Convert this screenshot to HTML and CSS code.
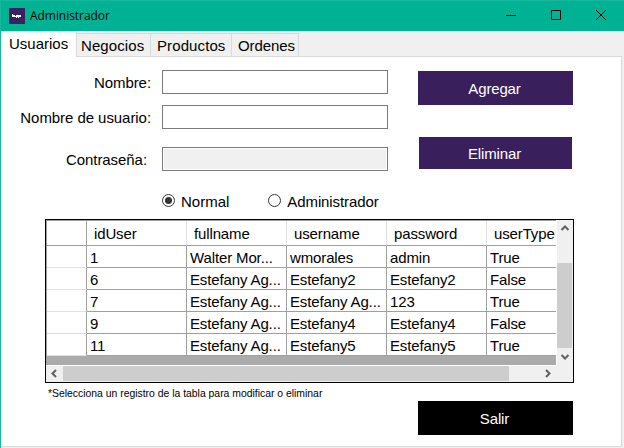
FILE: index.html
```html
<!DOCTYPE html>
<html lang="es">
<head>
<meta charset="utf-8">
<title>Administrador</title>
<link rel="stylesheet" href="styles.css">
</head>
<body>
<div class="window">
  <header class="titlebar">
    <svg class="app-icon" width="16" height="16" viewBox="0 0 16 16"><rect width="16" height="16" fill="#3a2160"/><path d="M3 6h1v1h2v1h1V7h5v2h-2v1H9V9H8v1H7V9H3z" fill="#fff"/></svg>
    <h1 class="title">Administrador</h1>
    <div class="controls">
      <svg width="10" height="10" viewBox="0 0 10 10"><path d="M0 5.5h10" stroke="#000"/></svg>
      <svg width="10" height="10" viewBox="0 0 10 10"><path d="M.5.5h9v9h-9z" fill="none" stroke="#000"/></svg>
      <svg width="10" height="10" viewBox="0 0 10 10"><path d="M0 0l10 10M10 0L0 10" stroke="#000"/></svg>
    </div>
  </header>
  <nav class="tabs">
    <span class="tab active">Usuarios</span>
    <span class="tab negocios">Negocios</span>
    <span class="tab productos">Productos</span>
    <span class="tab ordenes">Ordenes</span>
  </nav>
  <main class="panel">
    <section class="top">
      <div class="fields">
        <label class="label">Nombre:</label><div class="input"></div>
        <label class="label">Nombre de usuario:</label><div class="input"></div>
        <label class="label pass">Contraseña:</label><div class="input disabled"></div>
        <div class="radios">
          <span class="radio"><svg width="13" height="13" viewBox="0 0 13 13"><circle cx="6.5" cy="6.5" r="6" fill="#fff" stroke="#333"/><circle cx="6.5" cy="6.5" r="3.5" fill="#333"/></svg>Normal</span>
          <span class="radio admin"><svg width="13" height="13" viewBox="0 0 13 13"><circle cx="6.5" cy="6.5" r="6" fill="#fff" stroke="#333"/></svg>Administrador</span>
        </div>
      </div>
      <div class="actions">
        <div class="button add">Agregar</div>
        <div class="button delete">Eliminar</div>
      </div>
    </section>
    <section class="grid">
      <div class="view">
        <div class="row head"><span></span><span>idUser</span><span>fullname</span><span>username</span><span>password</span><span>userType</span></div>
        <div class="row"><span></span><span>1</span><span>Walter Mor...</span><span>wmorales</span><span>admin</span><span>True</span></div>
        <div class="row"><span></span><span>6</span><span>Estefany Ag...</span><span>Estefany2</span><span>Estefany2</span><span>False</span></div>
        <div class="row"><span></span><span>7</span><span>Estefany Ag...</span><span>Estefany Ag...</span><span>123</span><span>True</span></div>
        <div class="row"><span></span><span>9</span><span>Estefany Ag...</span><span>Estefany4</span><span>Estefany4</span><span>False</span></div>
        <div class="row"><span></span><span>11</span><span>Estefany Ag...</span><span>Estefany5</span><span>Estefany5</span><span>True</span></div>
      </div>
      <div class="vbar">
        <svg width="16" height="16" viewBox="0 0 16 16"><path d="M4.5 10L8 6.5l3.5 3.5" fill="none" stroke="#606060" stroke-width="2"/></svg>
        <div class="vthumb"></div>
        <svg width="16" height="16" viewBox="0 0 16 16"><path d="M4.5 5L8 8.5L11.5 5" fill="none" stroke="#606060" stroke-width="2"/></svg>
      </div>
      <div class="hbar">
        <svg width="16" height="16" viewBox="0 0 16 16"><path d="M10 4L6.5 7.5l3.5 3.5" fill="none" stroke="#606060" stroke-width="2"/></svg>
        <div class="hthumb"></div>
        <svg width="16" height="16" viewBox="0 0 16 16"><path d="M6 4L9.5 7.5L6 11" fill="none" stroke="#606060" stroke-width="2"/></svg>
      </div>
    </section>
    <footer class="foot">
      <p class="note">*Selecciona un registro de la tabla para modificar o eliminar</p>
      <div class="button exit">Salir</div>
    </footer>
  </main>
</div>
</body>
</html>
```

FILE: styles.css
```css
* { box-sizing: border-box; }
body { margin: 0; font: 15px/18px "Liberation Sans", Arial, sans-serif; color: #000; }
svg { display: block; flex: none; }
.window { width: 624px; height: 448px; overflow: hidden; background: #f0f0f0; border-left: 1px solid #16b79c; }
.titlebar { height: 31px; display: flex; align-items: center; padding: 0 18px 0 8px; background: #00b294; border-top: 1px solid #16b79c; }
.title { margin: 0 0 0 5px; font: 12px/16px "Open Sans", "Noto Sans", sans-serif; letter-spacing: -.05px; }
.controls { display: flex; gap: 35px; margin: -2px 0 0 auto; }
.tabs { position: relative; z-index: 1; display: flex; align-items: flex-end; height: 25px; }
.tab { height: 23px; border: 1px solid #d9d9d9; border-left: 0; border-bottom: 0; padding: 3px 0 0 4px; white-space: nowrap; }
.tab.active { height: 26px; width: 76px; margin-bottom: -1px; background: #fff; padding: 3px 0 0 8px; }
.negocios { width: 74px; letter-spacing: .1px; }
.productos { width: 81px; padding-left: 6px; letter-spacing: .1px; }
.ordenes { width: 67px; padding-left: 6px; letter-spacing: -.1px; }
.panel { width: 621px; height: 391px; background: #fff; border-right: 1px solid #d9d9d9; border-bottom: 1px solid #d9d9d9; box-shadow: inset 0 1px #d9d9d9; }
.top { display: flex; height: 163px; padding-top: 14px; }
.fields { display: grid; grid-template-columns: 150px 226px; grid-template-rows: 24px 24px 24px auto; column-gap: 11px; row-gap: 11px; align-content: start; }
.label { text-align: right; padding-top: 4px; white-space: nowrap; letter-spacing: -.06px; }
.input { height: 24px; border: 1px solid #7a7a7a; background: #fff; }
.pass { margin-top: 7px; padding-right: 4px; }
.input.disabled { margin-top: 7px; background: #f0f0f0; box-shadow: inset 0 0 0 1px #fff; }
.radios { grid-column: 2; display: flex; margin-top: 18px; }
.radio { display: flex; align-items: flex-start; gap: 6px; height: 18px; white-space: nowrap; }
.radio svg { margin-top: 1px; }
.admin { margin-left: 39px; letter-spacing: -.1px; }
.actions { padding: 1px 0 0 30px; }
.button { display: flex; align-items: center; justify-content: center; width: 155px; height: 34px; color: #fff; background: #391f5b; letter-spacing: -.15px; }
.add { padding: 2px 2px 0 0; }
.delete { width: 153px; height: 32px; margin: 32px 0 0 1px; padding: 2px 2px 0 0; }
.grid { width: 529px; height: 164px; margin-left: 44px; border: 1px solid #000; display: grid; grid-template-columns: 511px 16px; grid-template-rows: 146px 16px; background: #f0f0f0; }
.view { overflow: hidden; width: 510px; height: 145px; background: #ababab; border-top: 1px solid #a0a0a0; border-left: 1px solid #a0a0a0; box-shadow: 0 1px #fff, 1px 0 #fff; letter-spacing: -.13px; }
.row { display: grid; grid-template-columns: 40px 100px 100px 100px 100px 100px; height: 22px; }
.row span { background: #fff; border-right: 1px solid #a0a0a0; border-bottom: 1px solid #a0a0a0; padding: 3px 0 0 3px; white-space: nowrap; overflow: hidden; }
.row span:first-child { border-bottom-color: #e0e0e0; }
.head { height: 25px; }
.row.head span { padding: 4px 0 0 7px; border-right-color: #e0e0e0; }
.row.head span:first-child { border-color: #a0a0a0; }
.vbar { display: flex; flex-direction: column; height: 146px; background: #f0f0f0; }
.vthumb { height: 85px; width: 15px; margin: 27px 0 2px; background: #cdcdcd; }
.hbar { grid-column: 1 / -1; display: flex; width: 510px; background: #f0f0f0; justify-content: space-between; }
.hthumb { width: 446px; height: 15px; margin: 0 auto 0 1px; background: #cdcdcd; }
.foot { display: flex; }
.note { margin: 4px 0 0 47px; width: 370px; font-size: 10.4px; line-height: 14px; white-space: nowrap; }
.exit { margin-top: 18px; padding: 2px 2px 0 0; background: #000; }
```
